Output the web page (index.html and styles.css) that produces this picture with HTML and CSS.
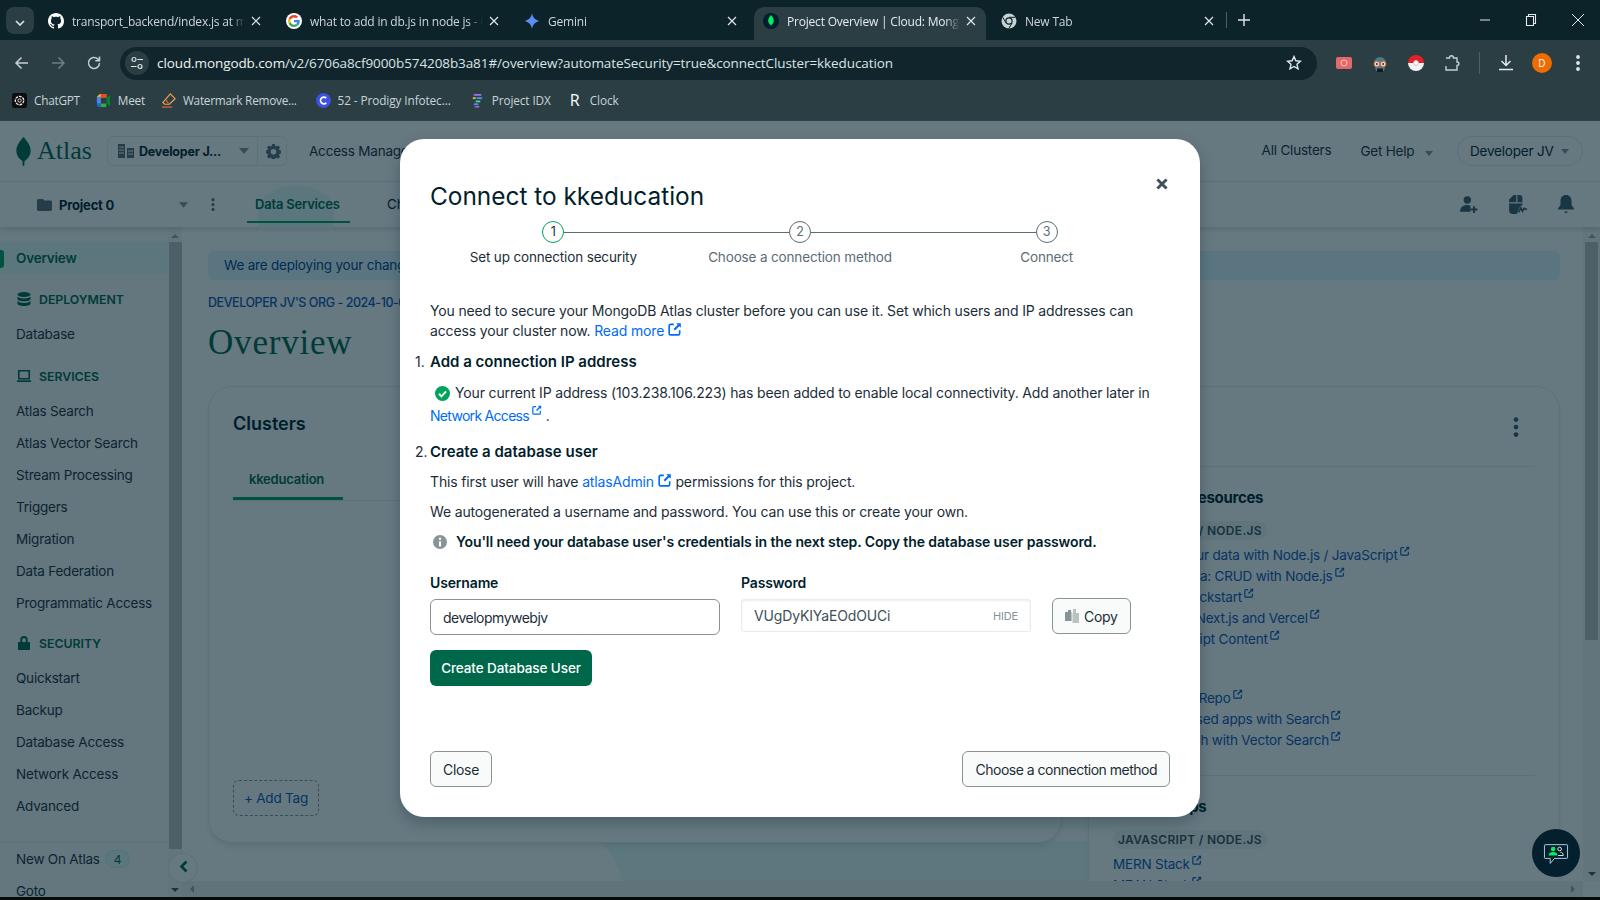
FILE: index.html
```html
<!DOCTYPE html>
<html lang="en">
<head>
    <meta charset="UTF-8">
    <title>Project Overview | Cloud: MongoDB Cloud</title>
    <link rel="stylesheet" href="styles.css">
</head>
<body>
    <svg class="defs" width="0" height="0">
        <symbol id="ext" viewBox="0 0 12 12">
            <path d="M5 2H2.2C1.5 2 1 2.5 1 3.2v6.6C1 10.5 1.5 11 2.2 11h6.6c.7 0 1.2-.5 1.2-1.2V7" fill="none" stroke="currentColor" stroke-width="1.4"/>
            <path d="M7 1h4v4L9.6 3.6 6 7.2 4.8 6l3.6-3.6z" fill="currentColor"/>
        </symbol>
        <symbol id="caret" viewBox="0 0 10 6"><path d="M0 0h10L5 6z" fill="currentColor"/></symbol>
        <symbol id="kebab" viewBox="0 0 4 16"><circle cx="2" cy="2" r="1.9" fill="currentColor"/><circle cx="2" cy="8" r="1.9" fill="currentColor"/><circle cx="2" cy="14" r="1.9" fill="currentColor"/></symbol>
    </svg>

    <!-- browser chrome -->
    <div class="tabstrip">
        <button class="tab-search"><svg width="10" height="6" viewBox="0 0 10 6"><path d="M1 1l4 4 4-4" fill="none" stroke="#dfe6e8" stroke-width="1.6"/></svg></button>
        <div class="tab">
            <svg class="favicon" viewBox="0 0 16 16"><path fill="#fff" d="M8 0C3.58 0 0 3.58 0 8c0 3.54 2.29 6.53 5.47 7.59.4.07.55-.17.55-.38 0-.19-.01-.82-.01-1.49-2.01.37-2.53-.49-2.69-.94-.09-.23-.48-.94-.82-1.13-.28-.15-.68-.52-.01-.53.63-.01 1.08.58 1.23.82.72 1.21 1.87.87 2.33.66.07-.52.28-.87.51-1.07-1.78-.2-3.64-.89-3.64-3.95 0-.87.31-1.59.82-2.15-.08-.2-.36-1.02.08-2.12 0 0 .67-.21 2.2.82.64-.18 1.32-.27 2-.27.68 0 1.36.09 2 .27 1.53-1.04 2.2-.82 2.2-.82.44 1.1.16 1.92.08 2.12.51.56.82 1.27.82 2.15 0 3.07-1.87 3.75-3.65 3.95.29.25.54.73.54 1.48 0 1.07-.01 1.93-.01 2.2 0 .21.15.46.55.38A8.013 8.013 0 0016 8c0-4.42-3.58-8-8-8z"/></svg>
            <span class="tab-title">transport_backend/index.js at main</span>
            <svg class="tab-x" viewBox="0 0 10 10"><path d="M1 1l8 8M9 1L1 9" stroke="#dfe6e8" stroke-width="1.2"/></svg>
        </div>
        <div class="tab">
            <svg class="favicon" viewBox="0 0 48 48"><circle cx="24" cy="24" r="24" fill="#fff"/><g transform="translate(6 6) scale(.75)"><path fill="#EA4335" d="M24 9.5c3.5 0 6.7 1.2 9.2 3.6l6.9-6.9C35.9 2.4 30.5 0 24 0 14.6 0 6.5 5.4 2.6 13.2l8 6.2C12.5 13.7 17.800 9.500 24 9.500z"/><path fill="#4285F4" d="M47 24.500c0-1.600-.2-3.100-.4-4.500H24v9h13c-.6 3-2.200 5.500-4.800 7.200l7.700 6c4.500-4.200 7.100-10.300 7.100-17.700z"/><path fill="#FBBC05" d="M10.600 28.600c-.5-1.400-.8-3-.8-4.600s.3-3.200.8-4.600l-8-6.200C.9 16.500 0 20.100 0 24s.9 7.500 2.600 10.800l8-6.200z"/><path fill="#34A853" d="M24 48c6.500 0 11.900-2.100 15.900-5.800l-7.700-6c-2.200 1.500-4.900 2.300-8.200 2.300-6.200 0-11.500-4.200-13.400-9.900l-8 6.200C6.500 42.600 14.600 48 24 48z"/></g></svg>
            <span class="tab-title">what to add in db.js in node js - Google</span>
            <svg class="tab-x" viewBox="0 0 10 10"><path d="M1 1l8 8M9 1L1 9" stroke="#dfe6e8" stroke-width="1.2"/></svg>
        </div>
        <div class="tab">
            <svg class="favicon" viewBox="0 0 16 16"><path fill="#5b8def" d="M8 0c.6 4.400 3.400 7.300 8 8-4.600.7-7.400 3.600-8 8-.6-4.400-3.400-7.300-8-8 4.600-.7 7.400-3.600 8-8z"/></svg>
            <span class="tab-title">Gemini</span>
            <svg class="tab-x" viewBox="0 0 10 10"><path d="M1 1l8 8M9 1L1 9" stroke="#dfe6e8" stroke-width="1.2"/></svg>
        </div>
        <div class="tab tab-active">
            <svg class="favicon" viewBox="0 0 16 16"><circle cx="8" cy="8" r="8" fill="#001e2b"/><path fill="#00ed64" d="M8 2c1.800 2 2.800 3.800 2.800 5.800 0 2-1.300 3.500-2.500 4.200L8 14.200 7.700 12C6.500 11.300 5.200 9.800 5.200 7.800 5.200 5.800 6.200 4 8 2z"/></svg>
            <span class="tab-title">Project Overview | Cloud: MongoDB Cloud</span>
            <svg class="tab-x" viewBox="0 0 10 10"><path d="M1 1l8 8M9 1L1 9" stroke="#dfe6e8" stroke-width="1.2"/></svg>
        </div>
        <div class="tab tab-new">
            <svg class="favicon" viewBox="0 0 16 16"><circle cx="8" cy="8" r="7.500" fill="#c8d2d5"/><circle cx="8" cy="8" r="3.700" fill="#0c2329"/><circle cx="8" cy="8" r="2.500" fill="#c8d2d5"/><path d="M8 4.300h6.500M5 10L1.800 4.300M11.100 10l-3.300 5.500" stroke="#0c2329" stroke-width="1"/></svg>
            <span class="tab-title">New Tab</span>
            <svg class="tab-x" viewBox="0 0 10 10"><path d="M1 1l8 8M9 1L1 9" stroke="#dfe6e8" stroke-width="1.2"/></svg>
        </div>
        <span class="tab-sep"></span>
        <svg class="tab-add" width="12" height="12" viewBox="0 0 12 12"><path d="M6 0v12M0 6h12" stroke="#dfe6e8" stroke-width="1.4"/></svg>
        <div class="win-controls">
            <svg width="12" height="12" viewBox="0 0 12 12"><path d="M1 6h10" stroke="#e4eaec" stroke-width="1"/></svg>
            <svg width="12" height="14" viewBox="0 0 12 14"><path d="M1.500 3.500h7v9h-7zM3.500 3.500v-2h7v9h-2" fill="none" stroke="#e4eaec" stroke-width="1.100"/></svg>
            <svg width="14" height="14" viewBox="0 0 14 14"><path d="M1 1l12 12M13 1L1 13" stroke="#e4eaec" stroke-width="1"/></svg>
        </div>
    </div>

    <div class="toolbar">
        <svg class="nav-icon" viewBox="0 0 16 16"><path d="M14 8H2.500M7.500 2.500L2 8l5.500 5.500" fill="none" stroke="#c6d0d3" stroke-width="1.500"/></svg>
        <svg class="nav-icon" viewBox="0 0 16 16"><path d="M2 8h11.500M8.500 2.500L14 8l-5.500 5.500" fill="none" stroke="#6f8085" stroke-width="1.500"/></svg>
        <svg class="nav-icon" viewBox="0 0 16 16"><path d="M13.500 8a5.500 5.500 0 1 1-1.600-3.900L13.500 5.700M13.500 1.500v4.200H9.300" fill="none" stroke="#c6d0d3" stroke-width="1.500"/></svg>
        <div class="omnibox">
            <span class="tune">
                <svg width="14" height="14" viewBox="0 0 14 14"><circle cx="4" cy="3.500" r="2" fill="none" stroke="#dfe6e8" stroke-width="1.200"/><path d="M7.500 3.500H13M1 10.500h5.500" stroke="#dfe6e8" stroke-width="1.200"/><circle cx="10" cy="10.500" r="2" fill="none" stroke="#dfe6e8" stroke-width="1.200"/></svg>
            </span>
            <span class="url">cloud.mongodb.com<span class="url-dim">/v2/6706a8cf9000b574208b3a81#/overview?automateSecurity=true&amp;connectCluster=kkeducation</span></span>
            <svg class="star" width="16" height="16" viewBox="0 0 16 16"><path d="M8 1.600l1.900 4.200 4.500.5-3.400 3 1 4.500L8 11.500l-4 2.300 1-4.500-3.400-3 4.500-.5z" fill="none" stroke="#e4eaec" stroke-width="1.400"/></svg>
        </div>
        <div class="extensions">
            <svg class="ext-rec" width="16" height="14" viewBox="0 0 16 14"><rect y="1" width="16" height="12" rx="2" fill="#e46a6a"/><circle cx="8" cy="7" r="3" fill="none" stroke="#f7c2c2" stroke-width="1"/></svg>
            <svg class="ext-spy" width="16" height="18" viewBox="0 0 16 18"><path d="M2 9a6 6 0 0 1 12 0l-2 8H4z" fill="#447f8d"/><circle cx="4.800" cy="10" r="2.800" fill="#e8dcd0" stroke="#e0623a"/><circle cx="11.200" cy="10" r="2.800" fill="#e8dcd0" stroke="#e0623a"/><circle cx="4.800" cy="10" r="1" fill="#20343a"/><circle cx="11.200" cy="10" r="1" fill="#20343a"/><path d="M5 14.500h6V18H5z" fill="#111c20"/></svg>
            <svg class="ext-poke" width="16" height="16" viewBox="0 0 16 16"><path d="M0 8a8 8 0 0 1 16 0z" fill="#e3202a"/><path d="M0 8a8 8 0 0 0 16 0z" fill="#f2f2f2"/><circle cx="8" cy="8" r="2.400" fill="#fff" stroke="#c5c5c5"/></svg>
            <svg class="ext-puzzle" width="16" height="18" viewBox="0 0 16 18"><path d="M2 4h3.500c0-3 4-3 4 0H13v4c2.500 0 2.500 3.500 0 3.500V16H2v-4" fill="none" stroke="#c6d0d3" stroke-width="1.400"/></svg>
            <span class="ext-sep"></span>
            <svg class="ext-down" width="16" height="18" viewBox="0 0 16 18"><path d="M8 1v10M3.500 7L8 11.500 12.500 7M1 15.500h14" fill="none" stroke="#e4eaec" stroke-width="1.500"/></svg>
            <span class="avatar">D</span>
            <svg class="ext-more" width="4" height="16"><use href="#kebab"/></svg>
        </div>
    </div>

    <div class="bookmarks">
        <span class="bm"><svg class="bm-icon" viewBox="0 0 16 16"><rect width="16" height="16" rx="3" fill="#0d0d0d"/><circle cx="8" cy="8" r="4.500" fill="none" stroke="#e8e8e8" stroke-width="1.400" stroke-dasharray="3 1"/><circle cx="8" cy="8" r="1.800" fill="none" stroke="#e8e8e8"/></svg>ChatGPT</span>
        <span class="bm"><svg class="bm-icon" viewBox="0 0 16 16"><path d="M1 4l3-3h7v4H5v6H1z" fill="#fbbc05"/><path d="M1 11h4v4H3.500C2 15 1 14 1 13z" fill="#1967d2"/><path d="M5 11h6v4H5z" fill="#34a853"/><path d="M11 5l4-3v12l-4-3z" fill="#00832d"/><path d="M5 5h6v6H5z" fill="#2a3e44"/><path d="M1 4h4v7H1z" fill="#4285f4"/><path d="M5 1h6v4H5z" fill="#ea4335"/></svg>Meet</span>
        <span class="bm"><svg class="bm-icon" viewBox="0 0 16 16"><path d="M10 1l5 5-6 6H4L2 10z" fill="none" stroke="#f0a04b" stroke-width="1.300"/><path d="M1 15h11" stroke="#e5603c" stroke-width="1.300"/><path d="M5 7l3 4" stroke="#e5603c" stroke-width="1.200"/></svg>Watermark Remove...</span>
        <span class="bm bm-wide"><svg class="bm-icon" viewBox="0 0 16 16"><circle cx="8" cy="8" r="8" fill="#3f51e0"/><path d="M11 5.500A3.600 3.600 0 1 0 11 10.500" fill="none" stroke="#fff" stroke-width="1.700"/></svg>52 - Prodigy Infotec...</span>
        <span class="bm bm-wide"><svg class="bm-icon" viewBox="0 0 16 16"><path d="M4 1h8v2H4z" fill="#a06ee0"/><path d="M7 4.500h6v2H7z" fill="#4f8be8"/><path d="M3 4.500h3v2H3z" fill="#e8b84f"/><path d="M6 8h5v2H6z" fill="#5cc98a"/><path d="M4 11h5v2H4z" fill="#4f8be8"/><path d="M5 14h5v1.500H5z" fill="#a06ee0"/></svg>Project IDX</span>
        <span class="bm bm-wide"><span class="bm-r">R</span>Clock</span>
    </div>

    <!-- the Atlas page behind the dialog -->
    <div class="app">
        <header class="topbar">
            <div class="logo">
                <svg width="15" height="31" viewBox="0 0 16 31"><path fill="#00684a" d="M8 0c4 4.500 7.600 9 7.600 14.500 0 5.500-3 9-6.400 11L8.700 31H7.300l-.5-5.500C3.400 23.500.4 20 .4 14.500.4 9 4 4.500 8 0z"/></svg>
                <span class="logo-text">Atlas</span>
            </div>
            <div class="org-picker">
                <svg width="16" height="14" viewBox="0 0 16 14"><path fill="#5c6c75" d="M0 0h7v14H0zM9 4h7v10H9z"/><path stroke="#fff" stroke-width="1" d="M1 3h5M1 6h5M1 9h5M10 7h5M10 10h5"/></svg>
                <span class="org-name">Developer J...</span>
                <svg class="caret org-caret" width="10" height="6"><use href="#caret"/></svg>
                <span class="org-gear">
                    <svg width="15" height="15" viewBox="0 0 16 16"><path fill="#5c6c75" fill-rule="evenodd" d="M6.500 0h3l.4 2.100 1.300.6L13 1.500l2 2.100-1.200 1.800.6 1.300 2.100.4v3l-2.100.4-.6 1.300 1.200 1.800-2 2.100-1.800-1.200-1.300.6-.4 2.100h-3l-.4-2.100-1.300-.6L3 15.500l-2-2.100 1.200-1.800-.6-1.300L-.5 9.900v-3l2.100-.4.6-1.300L1 3.600l2-2.100 1.800 1.200 1.300-.6zM8 5.300a3 3 0 1 0 0 6 3 3 0 0 0 0-6z"/></svg>
                </span>
            </div>
            <span class="top-link access">Access Manager</span>
            <span class="top-link all-clusters">All Clusters</span>
            <span class="top-link get-help">Get Help <svg class="caret" width="8" height="5"><use href="#caret"/></svg></span>
            <span class="user-pill">Developer JV <svg class="caret" width="8" height="5"><use href="#caret"/></svg></span>
        </header>
        <nav class="projectbar">
            <svg class="folder" width="15" height="12" viewBox="0 0 15 12"><path fill="#5c6c75" d="M0 1.500C0 .7.700 0 1.500 0H6l1.500 1.500h6c.8 0 1.500.7 1.500 1.500v7.500c0 .8-.7 1.500-1.500 1.500h-12C.7 12 0 11.300 0 10.500z"/></svg>
            <span class="project-name">Project 0</span>
            <svg class="caret project-caret" width="9" height="6"><use href="#caret"/></svg>
            <svg class="project-kebab" width="4" height="13"><use href="#kebab"/></svg>
            <span class="tab-link active">Data Services</span>
            <span class="tab-link charts">Charts</span>
            <div class="project-icons">
                <svg width="18" height="18" viewBox="0 0 16 16"><circle cx="6.500" cy="3.500" r="3.300" fill="#3d5a68"/><path d="M0 14c0-4 2.500-6 6.500-6 1.200 0 2 .2 2.800.5V14z" fill="#3d5a68"/><path d="M12.500 9v6M9.500 12h6" stroke="#3d5a68" stroke-width="1.800"/></svg>
                <svg width="20" height="19" viewBox="0 0 18 17"><path d="M5 0h2.500v6.500H1V4zM8.500 0H10c2 0 3 1 3 3v3.500H8.500zM1 7.500h12v1.300l-2.200 1.700-1.500 3L8 17H4c-2 0-3-1-3-3z" fill="#3d5a68"/><path d="M9.500 15.500l2-4 1.500 3 1.500-2.500 2.500 1" fill="none" stroke="#3d5a68" stroke-width="1.500"/></svg>
                <svg width="16" height="19" viewBox="0 0 16 19"><path d="M8 0c3.500 0 5.500 2.500 5.500 6v4l2.500 3.500v1H0v-1L2.500 10V6C2.500 2.500 4.500 0 8 0z" fill="#3d5a68"/><path d="M6 16.500h4L8 18.500z" fill="#3d5a68"/></svg>
            </div>
        </nav>
        <div class="workspace">
            <aside class="sidebar">
                <a class="side-item side-active">Overview</a>
                <div class="side-head head-first">
                    <svg width="14" height="14" viewBox="0 0 14 14"><ellipse cx="7" cy="2.500" rx="6.500" ry="2.500" fill="#00684a"/><path d="M.5 4.500c1 1.300 3.500 2 6.500 2s5.500-.7 6.500-2v2.500C13.500 8.300 10.700 9.300 7 9.300S.5 8.300.5 7zM.5 9c1 1.300 3.500 2 6.500 2s5.500-.7 6.500-2v2.500C13.500 13 10.700 14 7 14s-6.500-1-6.500-2.500z" fill="#00684a"/></svg>
                    DEPLOYMENT
                </div>
                <a class="side-item">Database</a>
                <div class="side-head">
                    <svg width="14" height="12" viewBox="0 0 14 12"><path fill="#00684a" fill-rule="evenodd" d="M1 0h12v9.500H1zM2.600 1.600v6.300h8.800V1.600zM0 10.300h14V12H0z"/></svg>
                    SERVICES
                </div>
                <a class="side-item">Atlas Search</a>
                <a class="side-item">Atlas Vector Search</a>
                <a class="side-item">Stream Processing</a>
                <a class="side-item">Triggers</a>
                <a class="side-item">Migration</a>
                <a class="side-item">Data Federation</a>
                <a class="side-item">Programmatic Access</a>
                <div class="side-head head-security">
                    <svg width="14" height="14" viewBox="0 0 12 14"><path fill="#00684a" fill-rule="evenodd" d="M2.300 6V3.800a3.700 3.700 0 0 1 7.400 0V6H11c.6 0 1 .4 1 1v6c0 .6-.4 1-1 1H1c-.6 0-1-.4-1-1V7c0-.6.4-1 1-1zM4.200 6h3.600V3.800a1.800 1.800 0 0 0-3.600 0z"/></svg>
                    SECURITY
                </div>
                <a class="side-item">Quickstart</a>
                <a class="side-item">Backup</a>
                <a class="side-item">Database Access</a>
                <a class="side-item">Network Access</a>
                <a class="side-item">Advanced</a>
                <div class="side-foot">
                    <a class="side-item">New On Atlas <span class="count">4</span></a>
                    <a class="side-item">Goto</a>
                </div>
            </aside>
            <div class="scroll-v side-scroll">
                <span class="arrow-up"></span>
                <span class="thumb thumb-side"></span>
                <span class="arrow-down"></span>
            </div>
            <div class="content">
                <div class="content-row">
                    <main class="main">
                        <svg class="main-wave" width="910" height="40" viewBox="0 0 910 40"><path d="M0 0c12 10 18 24 22 40h888V0z" fill="#e8fcfa"/></svg>
                        <div class="banner">We are deploying your changes (current action: configuring MongoDB)</div>
                        <div class="crumb">DEVELOPER JV'S ORG - 2024-10-09 &gt; PROJECT 0</div>
                        <h1 class="page-title">Overview</h1>
                        <div class="cards">
                            <section class="card clusters">
                                <h2>Clusters</h2>
                                <div class="cluster-tabs"><span>kkeducation</span></div>
                                <div class="add-tag">+ Add Tag</div>
                            </section>
                            <section class="card resources">
                                <div class="res-top"><svg class="res-kebab" width="6" height="20"><use href="#kebab"/></svg></div>
                                <h3>Developer Resources</h3>
                                <span class="pill">JAVASCRIPT / NODE.JS</span>
                                <a class="res-link">Accessing your data with Node.js / JavaScript <svg><use href="#ext"/></svg></a>
                                <a class="res-link">Work with Data: CRUD with Node.js <svg><use href="#ext"/></svg></a>
                                <a class="res-link">MongoDB Quickstart <svg><use href="#ext"/></svg></a>
                                <a class="res-link">Building with Next.js and Vercel <svg><use href="#ext"/></svg></a>
                                <a class="res-link">Write JavaScript Content <svg><use href="#ext"/></svg></a>
                                <a class="res-link res-gap">Sample Apps Repo <svg><use href="#ext"/></svg></a>
                                <a class="res-link">Build RAG-based apps with Search <svg><use href="#ext"/></svg></a>
                                <a class="res-link">Building search with Vector Search <svg><use href="#ext"/></svg></a>
                                <div class="res-rule"></div>
                                <h3>Sample Apps</h3>
                                <span class="pill">JAVASCRIPT / NODE.JS</span>
                                <a class="res-link">MERN Stack <svg><use href="#ext"/></svg></a>
                                <a class="res-link">MEAN Stack <svg><use href="#ext"/></svg></a>
                            </section>
                        </div>
                    </main>
                    <div class="scroll-v page-scroll">
                        <span class="arrow-up"></span>
                        <span class="thumb thumb-page"></span>
                        <span class="arrow-down"></span>
                    </div>
                </div>
                <div class="scroll-h"><span class="arrow-left"></span><span class="arrow-right"></span></div>
            </div>
        </div>
        <button class="collapse"><svg width="9" height="13" viewBox="0 0 9 13"><path d="M7.500 1.500l-5 5 5 5" fill="none" stroke="#00684a" stroke-width="2.600"/></svg></button>
        <div class="scrim"></div>

        <div class="modal">
            <svg class="modal-close" width="12" height="12" viewBox="0 0 11 11"><path d="M1.300 1.300l8.400 8.400M9.700 1.300L1.300 9.700" stroke="#3d4f58" stroke-width="2.600"/></svg>
            <h2 class="modal-title">Connect to kkeducation</h2>
            <div class="stepper">
                <div class="step step-current"><span class="step-num">1</span><span class="step-label">Set up connection security</span></div>
                <div class="step"><span class="step-num">2</span><span class="step-label">Choose a connection method</span></div>
                <div class="step"><span class="step-num">3</span><span class="step-label">Connect</span></div>
            </div>
            <p class="intro">You need to secure your MongoDB Atlas cluster before you can use it. Set which users and IP addresses can access your cluster now. <a class="link">Read more <svg class="ext-big"><use href="#ext"/></svg></a></p>
            <h4 class="section-head head-ip"><span class="num">1.</span>Add a connection IP address</h4>
            <p class="ip-note">
                <svg class="check" width="15" height="15" viewBox="0 0 16 16"><circle cx="8" cy="8" r="8" fill="#00a35c"/><path d="M4.200 8.300l2.700 2.700 4.900-5.300" fill="none" stroke="#fff" stroke-width="2"/></svg>Your current IP address (103.238.106.223) has been added to enable local connectivity. Add another later in <a class="link link-tight">Network Access<svg class="ext-small"><use href="#ext"/></svg></a> .
            </p>
            <h4 class="section-head head-user"><span class="num">2.</span>Create a database user</h4>
            <p class="line">This first user will have <a class="link">atlasAdmin <svg class="ext-big"><use href="#ext"/></svg></a> permissions for this project.</p>
            <p class="line">We autogenerated a username and password. You can use this or create your own.</p>
            <p class="line notice">
                <svg width="14" height="14" viewBox="0 0 16 16"><circle cx="8" cy="8" r="8" fill="#889397"/><path d="M6.800 7h2.400v6H6.800zM6.800 3h2.400v2.400H6.800z" fill="#fff"/></svg>
                You'll need your database user's credentials in the next step. Copy the database user password.
            </p>
            <div class="fields">
                <div class="field">
                    <label>Username</label>
                    <div class="input input-user">developmywebjv</div>
                </div>
                <div class="field">
                    <label>Password</label>
                    <div class="input input-readonly">VUgDyKIYaEOdOUCi<span class="hide">HIDE</span></div>
                </div>
                <button class="btn btn-copy"><svg width="14" height="14" viewBox="0 0 14 14"><path d="M3 1h3v2H3zM0 3h6.500v9H0z" fill="#889397"/><path d="M8 0h3v8H8zM7.500 4H14v10H7.500z" fill="#b8c4c2"/></svg>Copy</button>
            </div>
            <button class="btn-primary">Create Database User</button>
            <div class="modal-footer">
                <button class="btn">Close</button>
                <button class="btn btn-next">Choose a connection method</button>
            </div>
        </div>

        <button class="chat">
            <svg viewBox="0 0 36 34"><path d="M3 2h30c.6 0 1 .4 1 1v17c0 .6-.4 1-1 1H16l-6 7v-7H3c-.6 0-1-.4-1-1V3c0-.6.4-1 1-1z" fill="none" stroke="#c3e7fe" stroke-width="1.200"/><circle cx="14" cy="8" r="3.200" fill="#00ed64"/><path d="M8 17c0-4 2.500-5 6-5s6 1 6 5z" fill="#00ed64"/><circle cx="23" cy="8" r="2.500" fill="none" stroke="#e8edeb" stroke-width="1.300"/><path d="M21 17h7c0-3-1.500-4.500-4-4.500" fill="none" stroke="#e8edeb" stroke-width="1.300"/></svg>
        </button>
    </div>
    <div class="bottom-edge"></div>
</body>
</html>
```

FILE: styles.css
```css
* {
    box-sizing: border-box;
}
html, body {
    margin: 0;
    height: 100%;
    overflow: hidden;
}
body {
    width: 1600px;
    height: 900px;
    display: flex;
    flex-direction: column;
    font-family: Inter, "Noto Sans", sans-serif;
    background: #0c2329;
}
a {
    text-decoration: none;
}
button {
    font-family: inherit;
}
.defs {
    position: absolute;
}

/* browser chrome */
.tabstrip {
    height: 40px;
    flex: none;
    display: flex;
    align-items: flex-end;
    padding-left: 6px;
    background: #0c2329;
    font-family: "Open Sans", sans-serif;
    font-size: 12px;
    letter-spacing: -.2px;
    color: #cdd6d9;
}
.tab-search {
    width: 28px;
    height: 27px;
    margin-bottom: 6px;
    margin-right: 6px;
    padding: 0;
    border: none;
    border-radius: 8px;
    background: #2a3e44;
}
.tab {
    width: 238px;
    height: 33px;
    flex: none;
    display: flex;
    align-items: center;
    padding-left: 8px;
    padding-bottom: 5px;
}
.favicon {
    width: 16px;
    height: 16px;
    flex: none;
    margin-right: 8px;
}
.tab-title {
    width: 173px;
    white-space: nowrap;
    overflow: hidden;
    -webkit-mask-image: linear-gradient(to right, #000 158px, transparent 173px);
    mask-image: linear-gradient(to right, #000 158px, transparent 173px);
}
.tab-x {
    width: 10px;
    height: 10px;
    margin-left: 6px;
}
.tab-active {
    width: 232px;
    margin-right: 6px;
    padding-left: 9px;
    border-radius: 10px 10px 0 0;
    background: #2a3e44;
    color: #e6ecee;
}
.tab-new {
    padding-left: 9px;
    width: 234px;
}
.tab-sep {
    width: 1px;
    height: 16px;
    margin-bottom: 12px;
    background: #4c5f65;
}
.tab-add {
    margin-left: 11px;
    margin-bottom: 14px;
}
.win-controls {
    margin-left: auto;
    height: 40px;
    width: 130px;
    padding: 0 15px 0 0;
    display: flex;
    align-items: center;
    justify-content: flex-end;
    gap: 34px;
}
.toolbar {
    height: 43px;
    flex: none;
    display: flex;
    align-items: center;
    padding: 3px 0 0 14px;
    background: #2a3e44;
}
.nav-icon {
    width: 16px;
    height: 16px;
    margin-right: 20px;
}
.omnibox {
    width: 1197px;
    height: 33px;
    margin-left: -2px;
    display: flex;
    align-items: center;
    padding-left: 5px;
    border-radius: 17px;
    background: #11262c;
}
.tune {
    width: 24px;
    height: 24px;
    display: flex;
    align-items: center;
    justify-content: center;
    border-radius: 50%;
    background: #2a3e44;
}
.url {
    margin-left: 8px;
    font-family: "Open Sans", sans-serif;
    font-size: 13.5px;
    letter-spacing: -.09px;
    color: #eef2f3;
    white-space: nowrap;
}
.url-dim {
    color: #dbe3e5;
}
.star {
    margin-left: auto;
    margin-right: 15px;
}
.extensions {
    display: flex;
    align-items: center;
    margin-left: 19px;
}
.ext-rec, .ext-spy, .ext-poke {
    margin-right: 20px;
}
.ext-puzzle {
    margin-right: 19px;
}
.ext-sep {
    width: 1px;
    height: 22px;
    margin-right: 18px;
    background: #4c5f65;
}
.ext-down {
    margin-right: 18px;
}
.avatar {
    width: 20px;
    height: 20px;
    margin-right: 24px;
    border-radius: 50%;
    background: #ef6c00;
    color: #fff;
    font-family: "Open Sans", sans-serif;
    font-size: 10px;
    line-height: 20px;
    text-align: center;
}
.ext-more {
    color: #dfe6e8;
}
.bookmarks {
    height: 37px;
    flex: none;
    display: flex;
    align-items: center;
    gap: 16px;
    padding: 0 0 3px 12px;
    background: #2a3e44;
    font-family: "Open Sans", sans-serif;
    font-size: 11.8px;
    letter-spacing: -.25px;
    color: #c9d4d8;
}
.bm {
    display: flex;
    align-items: center;
    white-space: nowrap;
}
.bm-wide {
    margin-left: 3px;
    letter-spacing: -.1px;
}
.bm-icon {
    width: 15px;
    height: 15px;
    margin-right: 7px;
}
.bm-r {
    width: 20px;
    font-size: 16px;
    color: #fff;
}

/* atlas page */
.app {
    position: relative;
    flex: 1;
    display: flex;
    flex-direction: column;
    overflow: hidden;
    background: #fff;
    color: #001e2b;
    font-size: 13.5px;
    letter-spacing: -.2px;
}
.topbar {
    height: 62px;
    flex: none;
    display: flex;
    align-items: center;
    padding-left: 16px;
    border-top: 1px solid #777;
    border-bottom: 1px solid #e8edeb;
}
.logo {
    width: 91px;
    display: flex;
    align-items: center;
    gap: 6px;
}
.logo-text {
    font-family: "Liberation Serif", serif;
    font-size: 26px;
    letter-spacing: 0;
    color: #00684a;
}
.org-picker {
    width: 180px;
    height: 30px;
    display: flex;
    align-items: center;
    padding-left: 10px;
    border: 1px solid #e8edeb;
    border-radius: 6px;
}
.org-name {
    margin-left: 5px;
    width: 94px;
    font-weight: 700;
    font-size: 12.5px;
    white-space: nowrap;
    color: #001e2b;
}
.caret {
    color: #889397;
}
.org-caret {
    margin-left: 6px;
}
.org-gear {
    margin-left: 8px;
    height: 100%;
    padding-left: 8px;
    display: flex;
    align-items: center;
    border-left: 1px solid #e8edeb;
}
.top-link {
    color: #1c2d38;
    white-space: nowrap;
}
.access {
    margin-left: 22px;
}
.all-clusters {
    margin-left: auto;
    margin-right: 29px;
    padding-bottom: 3px;
}
.get-help {
    margin-right: 24px;
}
.get-help .caret, .user-pill .caret {
    margin-left: 7px;
}
.user-pill {
    width: 126px;
    height: 30px;
    margin-right: 17px;
    display: flex;
    align-items: center;
    padding-left: 12px;
    border: 1px solid #e8edeb;
    border-radius: 16px;
}
.projectbar {
    height: 45px;
    flex: none;
    display: flex;
    align-items: center;
    position: relative;
    z-index: 1;
    padding-left: 37px;
    box-shadow: 0 3px 4px rgba(0, 30, 43, .12);
    background: #fff;
}
.project-name {
    margin-left: 7px;
    width: 113px;
    font-weight: 700;
    font-size: 13px;
}
.project-caret {
    margin-left: 7px;
}
.project-kebab {
    margin-left: 23px;
    color: #5c6c75;
}
.tab-link {
    margin-left: 32px;
    line-height: 34px;
    padding: 0 8px;
    height: 36px;
    white-space: nowrap;
}
.tab-link.active {
    position: relative;
    font-weight: 600;
    font-size: 13px;
    width: 103px;
    color: #00684a;
    border-bottom: 2px solid #00a35c;
}
.tab-link.active::before {
    content: "";
    position: absolute;
    left: 11px;
    right: 16px;
    top: -1px;
    bottom: -7px;
    z-index: -1;
    border-radius: 40px 40px 0 0 / 24px 24px 0 0;
    background: #e3fcf7;
}
.tab-link.charts {
    margin-left: 29px;
}
.project-icons {
    margin-left: auto;
    margin-right: 26px;
    display: flex;
    align-items: center;
    gap: 30px;
}
.workspace {
    flex: 1;
    display: flex;
    min-height: 0;
}
.content {
    flex: 1;
    min-width: 0;
    display: flex;
    flex-direction: column;
}
.content-row {
    flex: 1;
    min-height: 0;
    display: flex;
}
.sidebar {
    width: 168px;
    flex: none;
    padding-top: 15px;
    display: flex;
    flex-direction: column;
    overflow: hidden;
    background: #f9fbfa;
}
.side-item {
    height: 32px;
    flex: none;
    display: flex;
    align-items: center;
    padding-left: 16px;
    color: #1c2d38;
    white-space: nowrap;
}
.side-active {
    position: relative;
    font-weight: 600;
    color: #00684a;
    background: #e3fcf7;
}
.side-active::before {
    content: "";
    position: absolute;
    left: 0;
    top: 8px;
    width: 4px;
    height: 18px;
    border-radius: 0 3px 3px 0;
    background: #00a35c;
}
.side-head {
    height: 32px;
    flex: none;
    margin: 10px 0 3px;
    display: flex;
    align-items: center;
    gap: 8px;
    padding-left: 17px;
    font-weight: 600;
    font-size: 12.3px;
    letter-spacing: 0;
    color: #00684a;
}
.head-first {
    margin-top: 9px;
}
.head-security {
    margin-top: 8px;
}
.side-foot {
    margin-top: 20px;
    border-top: 1px solid #e8edeb;
}
.count {
    height: 18px;
    padding: 0 8px;
    margin-left: 5px;
    line-height: 17px;
    font-size: 12px;
    border: 1px solid #c0fae6;
    border-radius: 9px;
    background: #e3fcf7;
    color: #00684a;
}
.scroll-v {
    width: 14px;
    flex: none;
    display: flex;
    flex-direction: column;
    align-items: center;
    background: #f5f5f5;
}
.page-scroll {
    width: 17px;
}
.arrow-up {
    width: 0;
    height: 0;
    margin: 7px 0 4px;
    border-left: 4px solid transparent;
    border-right: 4px solid transparent;
    border-bottom: 4px solid #a3a3a3;
}
.arrow-down {
    width: 0;
    height: 0;
    margin-top: auto;
    margin-bottom: 5px;
    border-left: 4px solid transparent;
    border-right: 4px solid transparent;
    border-top: 4px solid #505050;
}
.thumb {
    width: 13px;
    background: #c1c1c1;
}
.thumb-side {
    height: 607px;
}
.thumb-page {
    height: 398px;
}
.main {
    position: relative;
    flex: 1;
    min-width: 0;
    padding: 24px 23px 0 26px;
    overflow: hidden;
    background: #fff;
}
.main-wave {
    position: absolute;
    left: 418px;
    bottom: 0;
}
.banner {
    position: relative;
    height: 29px;
    line-height: 29px;
    padding-left: 16px;
    border-radius: 6px;
    background: #e1f7ff;
    color: #083c90;
    white-space: nowrap;
    overflow: hidden;
}
.crumb {
    margin-top: 14px;
    font-size: 12.5px;
    line-height: 18px;
    font-weight: 500;
    letter-spacing: -.45px;
    white-space: nowrap;
    color: #1254b7;
}
.page-title {
    margin: 10px 0 0;
    font-family: "Liberation Serif", serif;
    font-weight: 400;
    font-size: 35px;
    line-height: 42px;
    letter-spacing: .8px;
    color: #00684a;
}
.cards {
    position: relative;
    margin-top: 22px;
    display: flex;
    gap: 26px;
}
.card {
    border: 1px solid #e8edeb;
    border-radius: 24px;
    background: #fff;
    box-shadow: 0 4px 10px -4px rgba(0, 30, 43, .2);
}
.clusters {
    width: 854px;
    height: 457px;
    padding: 25px 24px;
    display: flex;
    flex-direction: column;
}
.clusters h2 {
    margin: 0;
    font-size: 18px;
    line-height: 24px;
    font-weight: 600;
    letter-spacing: 0;
}
.cluster-tabs {
    margin-top: 27px;
    border-bottom: 1px solid #e8edeb;
}
.cluster-tabs span {
    display: block;
    width: 110px;
    height: 37px;
    padding-left: 16px;
    line-height: 32px;
    font-weight: 600;
    font-size: 13px;
    color: #00684a;
    border-bottom: 3px solid #00a35c;
}
.add-tag {
    width: 86px;
    height: 36px;
    margin-top: auto;
    line-height: 34px;
    text-align: center;
    border: 1px dashed #889397;
    border-radius: 6px;
    color: #1254b7;
    margin-bottom: 1px;
}
.resources {
    width: 472px;
    height: 560px;
    padding: 0 24px;
    display: flex;
    flex-direction: column;
    align-items: flex-start;
    border-radius: 24px 24px 0 0;
}
.res-top {
    align-self: stretch;
    height: 80px;
    padding-top: 30px;
    padding-right: 16px;
    text-align: right;
    border-bottom: 1px solid #e8edeb;
}
.res-kebab {
    color: #3d5a68;
}
.resources h3 {
    margin: 20px 0 0;
    font-size: 15px;
    line-height: 22px;
    font-weight: 700;
    letter-spacing: -.3px;
    white-space: nowrap;
}
.pill {
    margin-top: 12px;
    height: 19px;
    padding: 0 5px;
    line-height: 19px;
    font-size: 12px;
    font-weight: 600;
    letter-spacing: .3px;
    white-space: nowrap;
    border-radius: 10px;
    background: #f0f5f3;
    color: #3d4f58;
}
.res-link {
    display: flex;
    height: 21px;
    flex: none;
    align-items: center;
    gap: 2px;
    white-space: nowrap;
    color: #1254b7;
}
.pill + .res-link {
    margin-top: 4px;
}
.res-gap {
    margin-top: 38px;
}
.res-link svg {
    width: 10px;
    height: 10px;
    margin-bottom: 8px;
}
.res-rule {
    align-self: stretch;
    margin-top: 25px;
    height: 1px;
    background: #e8edeb;
}
.scroll-h {
    height: 16px;
    flex: none;
    display: flex;
    align-items: center;
    justify-content: space-between;
    margin-right: 17px;
    padding: 0 8px;
    background: #f0f0f0;
}
.arrow-left {
    border-top: 4px solid transparent;
    border-bottom: 4px solid transparent;
    border-right: 4px solid #a3a3a3;
}
.arrow-right {
    border-top: 4px solid transparent;
    border-bottom: 4px solid transparent;
    border-left: 4px solid #a3a3a3;
}
.collapse {
    position: absolute;
    left: 168px;
    top: 733px;
    z-index: 1;
    width: 30px;
    height: 30px;
    padding: 0;
    border: 1px solid #e8edeb;
    border-radius: 50%;
    background: #fff;
}
.scrim {
    position: absolute;
    inset: 0;
    z-index: 2;
    background: rgba(0, 30, 43, .6);
}

/* dialog */
.modal {
    position: absolute;
    left: 400px;
    top: 19px;
    z-index: 3;
    width: 800px;
    height: 678px;
    display: flex;
    flex-direction: column;
    padding: 41px 30px 30px;
    border-radius: 24px;
    background: #fff;
    box-shadow: 0 6px 14px rgba(0, 30, 43, .25);
    font-size: 14px;
    letter-spacing: -.15px;
    color: #001e2b;
}
.modal-close {
    position: absolute;
    left: 756px;
    top: 39px;
}
.modal-title {
    margin: 0;
    font-size: 24.4px;
    line-height: 32px;
    font-weight: 400;
    letter-spacing: 0;
}
.stepper {
    margin-top: 9px;
    display: grid;
    grid-template-columns: repeat(3, 1fr);
}
.step {
    position: relative;
    display: flex;
    flex-direction: column;
    align-items: center;
    color: #5c6c75;
}
.step:not(:first-child)::before {
    content: "";
    position: absolute;
    left: calc(-50% + 11px);
    right: calc(50% + 11px);
    top: 11px;
    height: 1px;
    background: #5c6c75;
}
.step-num {
    width: 22px;
    height: 22px;
    line-height: 20px;
    text-align: center;
    font-size: 12.5px;
    border: 1px solid #5c6c75;
    border-radius: 50%;
}
.step-label {
    margin-top: 4px;
    font-size: 13.5px;
    line-height: 20px;
}
.step-current {
    color: #1c2d38;
}
.step-current .step-num {
    border-color: #00a35c;
}
.intro {
    margin: 34px 0 0;
    line-height: 20px;
    color: #1c2d38;
}
.link {
    color: #016bf8;
}
.link-tight {
    letter-spacing: -.7px;
}
.ext-big {
    width: 14px;
    height: 14px;
}
.ext-small {
    width: 10px;
    height: 10px;
    margin-left: 3px;
    vertical-align: 6px;
}
.section-head {
    position: relative;
    margin: 0;
    line-height: 20px;
    font-size: 15px;
    font-weight: 600;
    letter-spacing: 0;
    color: #001e2b;
}
.num {
    position: absolute;
    left: -15px;
    font-size: 14px;
    font-weight: 400;
    color: #1c2d38;
}
.head-ip {
    margin-top: 11px;
}
.head-user {
    margin-top: 15px;
}
.ip-note {
    margin: 9px 0 0;
    line-height: 23px;
    color: #1c2d38;
}
.check {
    margin: 0 5px;
    vertical-align: -3px;
}
.line {
    margin: 10px 0 0;
    line-height: 20px;
    color: #1c2d38;
}
.notice {
    display: flex;
    align-items: center;
    gap: 9px;
    padding-left: 3px;
    font-weight: 600;
    letter-spacing: -.1px;
    color: #001e2b;
}
.fields {
    margin-top: 21px;
    display: flex;
    align-items: flex-end;
    gap: 21px;
}
.field {
    width: 290px;
}
.field label {
    display: block;
    margin-bottom: 6px;
    line-height: 20px;
    font-weight: 600;
    color: #001e2b;
}
.input {
    height: 36px;
    display: flex;
    align-items: center;
    padding: 0 12px;
    border: 1px solid #889397;
    border-radius: 6px;
    color: #1c2d38;
}
.input-user {
    letter-spacing: -.5px;
}
.input-readonly {
    height: 33px;
    margin-bottom: 3px;
    border-color: #e8edeb;
    border-radius: 3px;
    box-shadow: inset 0 1px 2px rgba(0, 0, 0, .08);
    color: #3d4f58;
}
.hide {
    margin-left: auto;
    font-size: 11px;
    color: #889397;
}
.btn {
    height: 36px;
    padding: 0 12px;
    border: 1px solid #889397;
    border-radius: 6px;
    background: #f9fbfa;
    font-size: 14px;
    letter-spacing: -.3px;
    color: #1c2d38;
}
.btn-next {
    letter-spacing: -.5px;
}
.btn-copy {
    display: flex;
    align-items: center;
    gap: 5px;
    width: 79px;
    margin-bottom: 1px;
}
.btn-primary {
    width: 162px;
    height: 36px;
    margin-top: 15px;
    padding: 0;
    border: none;
    border-radius: 6px;
    background: #00684a;
    font-size: 13.5px;
    font-weight: 500;
    letter-spacing: -.1px;
    color: #fff;
}
.modal-footer {
    margin-top: auto;
    display: flex;
    justify-content: space-between;
}
.chat {
    position: absolute;
    left: 1532px;
    top: 709px;
    z-index: 3;
    width: 48px;
    height: 48px;
    padding: 7px 0 0;
    border: none;
    border-radius: 50%;
    background: #041f2d;
}
.chat svg {
    width: 26px;
    height: 25px;
}
.bottom-edge {
    height: 3px;
    flex: none;
    background: #0a0a0a;
}
```
